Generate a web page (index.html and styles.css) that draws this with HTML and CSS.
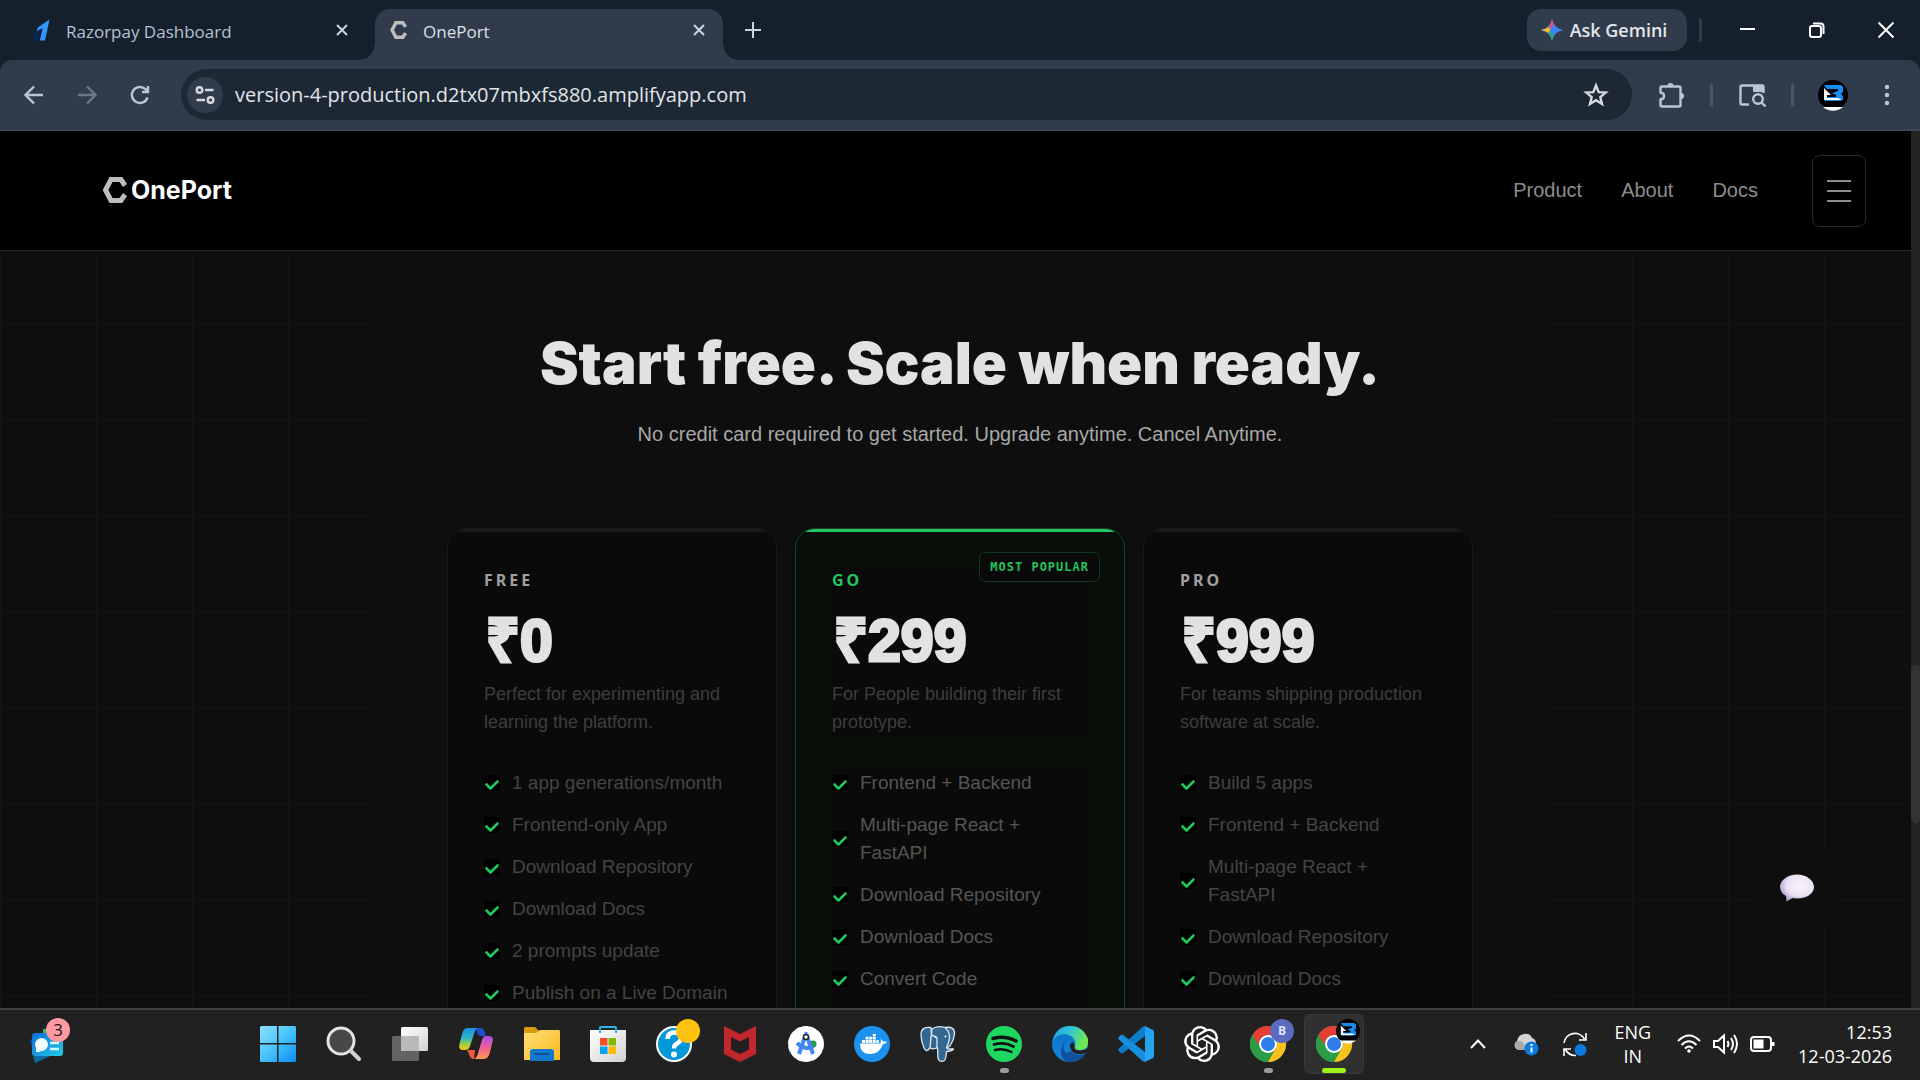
FILE: index.html
```html
<!DOCTYPE html>
<html lang="en">
<head>
<meta charset="utf-8">
<meta name="viewport" content="width=device-width, initial-scale=1">
<title>OnePort</title>
<link rel="stylesheet" href="styles.css">
</head>
<body>
<svg class="defs" aria-hidden="true">
  <defs>
    <linearGradient id="gWin" x1="0" y1="0" x2="1" y2="1"><stop offset="0" stop-color="#8fe0ff"/><stop offset=".5" stop-color="#46c3fb"/><stop offset="1" stop-color="#0a8bf5"/></linearGradient>
    <linearGradient id="gGrey" x1="0" y1="0" x2="1" y2="1"><stop offset="0" stop-color="#ffffff"/><stop offset="1" stop-color="#d2d2d2"/></linearGradient>
    <linearGradient id="gFolder" x1="0" y1="0" x2="1" y2="1"><stop offset="0" stop-color="#ffdf7d"/><stop offset="1" stop-color="#fbb915"/></linearGradient>
    <linearGradient id="gCopA" x1="0" y1="0" x2="0" y2="1"><stop offset="0" stop-color="#1b8fe8"/><stop offset=".45" stop-color="#2bb5c8"/><stop offset=".75" stop-color="#a5cf3c"/><stop offset="1" stop-color="#f6c51c"/></linearGradient>
    <linearGradient id="gCopB" x1="0" y1="0" x2="0" y2="1"><stop offset="0" stop-color="#a64de8"/><stop offset=".5" stop-color="#ee5f96"/><stop offset="1" stop-color="#ff9a4d"/></linearGradient>
    <linearGradient id="gCard" x1="0" y1="0" x2="1" y2="1"><stop offset="0" stop-color="#0a6fdc"/><stop offset="1" stop-color="#25cbe8"/></linearGradient>
    <linearGradient id="gEdgeTop" x1="0" y1="0" x2="1" y2=".4"><stop offset="0" stop-color="#1a9fe0"/><stop offset=".5" stop-color="#33c6d4"/><stop offset="1" stop-color="#6fe84e"/></linearGradient>
    <linearGradient id="gEdgeLow" x1="0" y1="0" x2="0" y2="1"><stop offset="0" stop-color="#0f6fc4"/><stop offset="1" stop-color="#1286e0"/></linearGradient>
    <radialGradient id="gBubble" cx=".58" cy=".4" r=".65"><stop offset="0" stop-color="#f8f3fb"/><stop offset=".6" stop-color="#ece2f3"/><stop offset="1" stop-color="#a893cf"/></radialGradient>
    <g id="chrome">
      <circle cx="18" cy="18" r="18" fill="#2c9c46"/>
      <path d="M2.4 9A18 18 0 0 1 33.600 9H18A9 9 0 0 0 10.200 13.500L8 18.500z" fill="#e63e32"/>
      <path d="M33.600 9A18 18 0 0 1 18 36L25.800 22.500A9 9 0 0 0 26 14L18 9z" fill="#fcc01b"/>
      <path d="M2.400 9L10.200 22.500A9 9 0 0 0 20 26.800L18 36A18 18 0 0 1 2.400 9z" fill="#2c9c46"/>
      <circle cx="18" cy="18" r="9" fill="#fff"/><circle cx="18" cy="18" r="7" fill="#2f7de9"/>
    </g>
    <g id="profile">
      <circle cx="15" cy="15" r="15" fill="#000"/>
      <path d="M6 5h17l2 2v5l-2 2 2 2v4l-5 1H7v-4h11v-2l-4-2 6-2V9H9z" fill="#168bf5"/>
      <path d="M6 8l7 7h-4v3h11l4 2H6z" fill="#fff"/>
      <path d="M5 27h20a15 15 0 0 1-20 0z" fill="#fff"/>
    </g>
    <g id="hexC">
      <path d="M22 8.500L18 2.500H8L2.500 13L8 23.500H18L22 17.500" fill="none" stroke="#bdbdbd" stroke-width="5"/>
    </g>
    <g id="check"><path d="M2.500 9.500L6.500 13.500L13.500 6.500" fill="none" stroke="#22c55e" stroke-width="2.600" stroke-linecap="round" stroke-linejoin="round"/></g>
  </defs>
</svg>

<div class="tabstrip">
  <div class="tab">
    <svg class="favicon" viewBox="0 0 24 24"><path d="M6 9L22 -2l-6 28h-7L13 9.500 5 14z" fill="#3395ff"/><path d="M3 15l8-5-4 16H-2z" fill="#072654"/></svg>
    <span class="tab-title">Razorpay Dashboard</span>
    <button class="tab-close" aria-label="Close tab"><svg width="12" height="12" viewBox="0 0 12 12"><path d="M1 1l10 10M11 1L1 11"/></svg></button>
  </div>
  <div class="tab tab-active">
    <svg class="favicon fav-hex" viewBox="0 0 25 26"><use href="#hexC"/></svg>
    <span class="tab-title">OnePort</span>
    <button class="tab-close" aria-label="Close tab"><svg width="12" height="12" viewBox="0 0 12 12"><path d="M1 1l10 10M11 1L1 11"/></svg></button>
  </div>
  <button class="new-tab" aria-label="New tab"><svg width="16" height="16" viewBox="0 0 16 16"><path d="M8 0v16M0 8h16"/></svg></button>
  <button class="gemini">
    <svg width="22" height="22" viewBox="0 0 22 22"><path d="M11 0Q13 9 22 11Q13 13 11 22Q9 13 0 11Q9 9 11 0z" fill="#3d85f5"/><path d="M11 0Q12 5 14 8L8.500 13L7 8.800Q10 6 11 0z" fill="#e8505b"/><path d="M0 11Q5 10 7.500 8L10 11.500L7.500 14Q5 12 0 11z" fill="#f4bd2c"/><path d="M11 22Q10 16 7 13.200L9.500 11.500L13 14.500Q12 17 11 22z" fill="#2fae5d"/><path d="M22 11Q14 9.500 12.500 6Q9 9 9 11.500Q10 14 12.500 15.500Q15 12.500 22 11z" fill="#3d85f5"/></svg>
    <span>Ask Gemini</span>
  </button>
  <span class="divider"></span>
  <div class="window-controls">
    <button aria-label="Minimize"><svg width="16" height="16" viewBox="0 0 16 16"><path d="M0 7h15"/></svg></button>
    <button aria-label="Restore"><svg width="16" height="16" viewBox="0 0 16 16"><rect x="1" y="4" width="11" height="11" rx="2"/><path d="M4 1.500h7.500a3 3 0 0 1 3 3V12"/></svg></button>
    <button aria-label="Close"><svg width="16" height="16" viewBox="0 0 16 16"><path d="M.5.5l15 15M15.500.5l-15 15"/></svg></button>
  </div>
</div>

<div class="toolbar">
  <div class="nav-buttons">
    <button aria-label="Back"><svg width="20" height="20" viewBox="0 0 20 20"><path d="M19 10H2M10 1.500L1.500 10l8.500 8.500"/></svg></button>
    <button class="dim" aria-label="Forward"><svg width="20" height="20" viewBox="0 0 20 20"><path d="M1 10h17M10 1.500l8.500 8.500-8.500 8.500"/></svg></button>
    <button aria-label="Reload"><svg width="20" height="20" viewBox="0 0 20 20"><path d="M17.500 12.500A8 8 0 1 1 15.500 4.200L18 6.500M18 1v6h-6"/></svg></button>
  </div>
  <div class="omnibox">
    <button class="site-info" aria-label="Site information"><svg width="20" height="20" viewBox="0 0 20 20"><circle cx="4.500" cy="5" r="2.800"/><path d="M10 5h8.500M1.500 15H10"/><circle cx="15.500" cy="15" r="2.800"/></svg></button>
    <input class="url" type="text" aria-label="Address" value="version-4-production.d2tx07mbxfs880.amplifyapp.com">
    <button class="star" aria-label="Bookmark"><svg width="24" height="24" viewBox="0 0 24 24"><path d="M12 2.500l2.700 6.600 7 .5-5.400 4.500 1.700 6.900-6-3.800-6 3.800 1.700-6.900L2.300 9.600l7-.5z"/></svg></button>
  </div>
  <button class="tool" aria-label="Extensions"><svg width="26" height="26" viewBox="0 0 26 26"><path d="M4 4.500h17a1.500 1.500 0 0 1 1.500 1.500v17a1.500 1.500 0 0 1-1.500 1.500H4A1.500 1.500 0 0 1 2.500 23v-5.500q3.500-.5 3.500-3.500t-3.500-3.500V6A1.500 1.500 0 0 1 4 4.500z"/><path class="solid" d="M9.500 4a3 3 0 0 1 6 0zM23 11a3 3 0 0 1 0 6z"/></svg></button>
  <span class="divider"></span>
  <button class="tool" aria-label="Search side panel"><svg width="28" height="26" viewBox="0 0 28 26"><path d="M11 22.500H4A1.500 1.500 0 0 1 2.500 21V5A1.500 1.500 0 0 1 4 3.500h20A1.500 1.500 0 0 1 25.500 5v6"/><path class="solid" d="M15 3h11v7H15z"/><circle cx="20" cy="17" r="4.800"/><path d="M23.500 20.500l4 4"/></svg></button>
  <span class="divider"></span>
  <div class="tool-group">
    <button class="tool" aria-label="Profile"><svg class="avatar" width="30" height="30" viewBox="0 0 30 30"><use href="#profile"/></svg></button>
    <button class="tool" aria-label="Menu"><svg width="6" height="22" viewBox="0 0 6 22"><g class="solid"><circle cx="3" cy="3" r="2.200"/><circle cx="3" cy="11" r="2.200"/><circle cx="3" cy="19" r="2.200"/></g></svg></button>
  </div>
</div>

<div class="viewport">
  <div class="site">
    <header class="site-header">
      <a class="brand" href="#"><svg width="24" height="26" viewBox="0 0 24 26"><use href="#hexC"/></svg><span>OnePort</span></a>
      <nav class="site-nav">
        <a href="#">Product</a>
        <a href="#">About</a>
        <a href="#">Docs</a>
        <button class="burger" aria-label="Open menu"><span></span><span></span><span></span></button>
      </nav>
    </header>
    <main class="pricing">
      <div class="pricing-inner">
        <h1>Start free. Scale when ready.</h1>
        <p class="lead">No credit card required to get started. Upgrade anytime. Cancel Anytime.</p>
        <div class="plans">
          <section class="plan">
            <div class="plan-head">
              <h2>FREE</h2>
              <p class="price">₹0</p>
              <p class="desc">Perfect for experimenting and learning the platform.</p>
            </div>
            <ul>
              <li><svg viewBox="0 0 16 16"><use href="#check"/></svg><span>1 app generations/month</span></li>
              <li><svg viewBox="0 0 16 16"><use href="#check"/></svg><span>Frontend-only App</span></li>
              <li><svg viewBox="0 0 16 16"><use href="#check"/></svg><span>Download Repository</span></li>
              <li><svg viewBox="0 0 16 16"><use href="#check"/></svg><span>Download Docs</span></li>
              <li><svg viewBox="0 0 16 16"><use href="#check"/></svg><span>2 prompts update</span></li>
              <li><svg viewBox="0 0 16 16"><use href="#check"/></svg><span>Publish on a Live Domain</span></li>
            </ul>
          </section>
          <section class="plan plan-go">
            <span class="badge">MOST POPULAR</span>
            <div class="plan-head">
              <h2>GO</h2>
              <p class="price">₹299</p>
              <p class="desc">For People building their first prototype.</p>
            </div>
            <ul>
              <li><svg viewBox="0 0 16 16"><use href="#check"/></svg><span>Frontend + Backend</span></li>
              <li><svg viewBox="0 0 16 16"><use href="#check"/></svg><span>Multi-page React + FastAPI</span></li>
              <li><svg viewBox="0 0 16 16"><use href="#check"/></svg><span>Download Repository</span></li>
              <li><svg viewBox="0 0 16 16"><use href="#check"/></svg><span>Download Docs</span></li>
              <li><svg viewBox="0 0 16 16"><use href="#check"/></svg><span>Convert Code</span></li>
            </ul>
          </section>
          <section class="plan">
            <div class="plan-head">
              <h2>PRO</h2>
              <p class="price">₹999</p>
              <p class="desc">For teams shipping production software at scale.</p>
            </div>
            <ul>
              <li><svg viewBox="0 0 16 16"><use href="#check"/></svg><span>Build 5 apps</span></li>
              <li><svg viewBox="0 0 16 16"><use href="#check"/></svg><span>Frontend + Backend</span></li>
              <li><svg viewBox="0 0 16 16"><use href="#check"/></svg><span>Multi-page React + FastAPI</span></li>
              <li><svg viewBox="0 0 16 16"><use href="#check"/></svg><span>Download Repository</span></li>
              <li><svg viewBox="0 0 16 16"><use href="#check"/></svg><span>Download Docs</span></li>
            </ul>
          </section>
        </div>
      </div>
    </main>
  </div>
  <div class="scrollbar"><span class="thumb"></span></div>
  <button class="chat" aria-label="Chat"><svg width="36" height="28" viewBox="0 0 36 28"><path d="M18 .5C27 .5 35 6 35 13s-8 11.500-17 11.500c-1.500 0-3-.2-4.300-.4L7.500 27.500 7 22C3 20 1 16.500 1 13 1 6 9 .5 18 .5z" fill="url(#gBubble)"/></svg></button>
</div>

<footer class="taskbar">
  <button class="widgets" aria-label="Widgets">
    <svg width="42" height="56" viewBox="0 0 42 56"><path d="M14 13h10v10H14z" fill="#35b56a"/><path d="M1 24l4-2 2 12-4-2z" fill="#0b4c94"/><path d="M4 40l24-3-22 10z" fill="#0c6aa0"/><rect x="3" y="17" width="31" height="23" rx="3" fill="url(#gCard)"/><ellipse cx="12.500" cy="28.500" rx="6.500" ry="6.500" fill="#f4fdff"/><path d="M7 31v5h5z" fill="#f4fdff"/><path d="M21 27h9M21 33h9" stroke="#d8fbff" stroke-width="2.400"/><circle cx="29" cy="14" r="12" fill="#ff9aa2"/><text x="29" y="20" text-anchor="middle" class="badge-num">3</text></svg>
  </button>
  <div class="apps">
    <button aria-label="Start"><svg viewBox="0 0 36 36"><path d="M1.500 0H17v17H0V1.500A1.500 1.500 0 0 1 1.500 0zM18.500 0h16A1.500 1.500 0 0 1 36 1.500V17H18.500zM0 18.500h17V36H1.500A1.500 1.500 0 0 1 0 34.500zM18.500 18.500H36v16a1.500 1.500 0 0 1-1.500 1.500h-16z" fill="url(#gWin)"/></svg></button>
    <button aria-label="Search"><svg viewBox="0 0 36 36"><circle cx="15" cy="15" r="13" fill="#484848" stroke="#e4e4e6" stroke-width="3"/><path d="M25 25l8 8" stroke="#d2d2d6" stroke-width="4" stroke-linecap="round"/></svg></button>
    <button aria-label="Task view"><svg viewBox="0 0 36 36"><rect x="9" y="1" width="27" height="24" rx="1.500" fill="url(#gGrey)"/><rect x="0" y="10" width="27" height="25" rx="1.500" fill="#6f6f6f" opacity=".85"/><path d="M9 10h18v15H9z" fill="#b9b9b9"/></svg></button>
    <button aria-label="Copilot"><svg viewBox="0 0 36 36"><path d="M18 2h4q4 0 5 5l1 3h-5q-3 0-4-4z" fill="#1d4fd0"/><path d="M9 2h11q-3 1-4 6l-4 12q-1 4-5 4H5q-5 0-3.500-6L4 8q1.500-6 5-6z" fill="url(#gCopA)"/><path d="M28 10h3q5 0 3.500 6L32 26q-1.500 7-6 7H16q3-1 4-6l4-13q1-4 4-4z" fill="url(#gCopB)"/><path d="M9 24h8l-1 9q-4 0-5-5z" fill="#ee5a3a"/></svg></button>
    <button aria-label="File Explorer"><svg viewBox="0 0 36 36"><path d="M0 2.500A1.500 1.500 0 0 1 1.500 1H11l4 4v4H0z" fill="#dd9a0c"/><path d="M0 7h12l4-3h19q1 0 1 1.500V34H0z" fill="url(#gFolder)"/><path d="M6 35V26q0-3 3-3h18q3 0 3 3v9z" fill="#1177cf"/><path d="M11 28h14" stroke="#0a4f98" stroke-width="2" stroke-linecap="round"/></svg></button>
    <button aria-label="Store"><svg viewBox="0 0 36 36"><path d="M10 8V2q0-1 1-1h14q1 0 1 1v6" fill="none" stroke="#2bb3ef" stroke-width="2"/><path d="M0 4h36v28q0 4-4 4H4q-4 0-4-4z" fill="url(#gGrey)"/><path d="M10 7V3M26 7V3" stroke="#2bb3ef" stroke-width="2"/><path d="M10 12h7.500v7.500H10z" fill="#f25022"/><path d="M18.500 12H26v7.500h-7.500z" fill="#7fba00"/><path d="M10 20.500h7.500V28H10z" fill="#00a4ef"/><path d="M18.500 20.500H26V28h-7.500z" fill="#ffb900"/></svg></button>
    <button aria-label="Help"><svg viewBox="0 0 36 36"><circle cx="18" cy="18" r="17" fill="#0098d8" stroke="#fff" stroke-width="2"/><path d="M11.500 13q0-6.500 7-6.500 6.500 0 6.500 5.500 0 3.500-4 5.500-3 1.500-3 5" fill="none" stroke="#fff" stroke-width="4.500"/><circle cx="18" cy="28.500" r="3" fill="#fff"/><circle cx="32" cy="5" r="12" fill="#ffc20e"/></svg></button>
    <button aria-label="McAfee"><svg viewBox="0 0 36 36"><path d="M2 0l16 8 16-8v28L18 36 2 28zM9 11v12.500L18 28l9-4.500V11l-9 4.500z" fill="#c1272d" fill-rule="evenodd"/></svg></button>
    <button aria-label="Android Studio"><svg viewBox="0 0 36 36"><circle cx="18" cy="18" r="16.500" fill="#fff" stroke="#fff" stroke-width="3" stroke-dasharray="5 2.400" stroke-linecap="round"/><circle cx="25" cy="18" r="3.500" fill="#1e9a48"/><path d="M17.500 9L11 28M18.500 9L25 28" stroke="#4285f4" stroke-width="4"/><path d="M18 6v5" stroke="#4285f4" stroke-width="3"/><path d="M9 17q9 8 16 3" fill="none" stroke="#4285f4" stroke-width="4"/><circle cx="18" cy="11" r="2.500" fill="#fff" stroke="#222" stroke-width="1.500"/></svg></button>
    <button aria-label="Docker"><svg viewBox="0 0 36 36"><circle cx="18" cy="18" r="18" fill="#1d91ee"/><path d="M6 17.500h20q1.500-1 .5-4.500 2 1 2.500 2.500 2-.5 4 .5-1 2-4 2Q26 28 15 28 6 28 6 17.500z" fill="#fff"/><path d="M8 14h3v3H8zM11.600 14h3v3h-3zM15.200 14h3v3h-3zM18.800 14h3v3h-3zM22.400 14h2.500v3h-2.500zM11.600 10.800h3v2.600h-3zM15.200 10.800h3v2.600h-3zM18.800 10.800h3v2.600h-3zM18.800 8h3v2.200h-3z" fill="#fff"/></svg></button>
    <button aria-label="PostgreSQL"><svg viewBox="0 0 36 36"><g fill="#336791" stroke="#dfe8ef" stroke-width="1.300" stroke-linejoin="round"><path d="M11 1.500Q1 0 1 9q0 6 3 13 2.500 4.500 5 1l3-4z"/><path d="M25 1.500Q35 0 34.500 8q-.5 6-4.500 12l-3 2-3-4z"/><path d="M12 3q5-4 13-1.500Q31 7 29 14q-1 5-2.500 7.500 0 1.500 2 1.500h5q-2 2.500-7 2.500-.5 9-3 9.500-4.500 1.500-5.500-3l-.5-10Q11 23 11 15z"/><path d="M10 22q5 2 7-1V12q-4-4-6-1z"/></g><circle cx="15.500" cy="11" r="1" fill="#fff"/><circle cx="25.500" cy="10.500" r="1" fill="#fff"/></svg></button>
    <button class="running" aria-label="Spotify"><svg viewBox="0 0 36 36"><circle cx="18" cy="18" r="18" fill="#1ed760"/><g fill="none" stroke="#121212" stroke-linecap="round"><path d="M7 12.500Q19 9 30 15" stroke-width="3.400"/><path d="M8 18.500Q18.500 15.500 27.500 20.500" stroke-width="2.800"/><path d="M9 24Q17.500 21.800 25.500 26" stroke-width="2.400"/></g></svg></button>
    <button aria-label="Edge"><svg viewBox="0 0 36 36"><circle cx="18" cy="18" r="18" fill="url(#gEdgeLow)"/><path d="M1 15Q4 0 18 0q13 0 18 13v4q0 7-8 7-6 0-5-3 2-7-4-11Q8 4 1 15z" fill="url(#gEdgeTop)"/><path d="M14 14q-6 8 2 15 7 6 17 0Q26 37 17 36 8 34 9 24q1-7 5-10z" fill="#11509c"/><path d="M22.500 21q0 3.500 6 3.500 4.500 0 7.500-3v6h-4q-10 2-13-3.500-3-6 2-8 2 2 1.500 5z" fill="#222"/><path d="M19 25q4 6 14 2.500l-2.500 4Q20 36 14 27z" fill="#11509c"/></svg></button>
    <button aria-label="VS Code"><svg viewBox="0 0 36 36"><path d="M27 0l8 4q1 .5 1 2v24q0 1.500-1 2l-8 4z" fill="#24a4ef"/><path d="M27 0v10L5 27q-1 .8-2 0L.8 25q-1.200-1.200 0-2.400L25 .5z" fill="#0b7cc8"/><path d="M27 36V26L5 9Q4 8.200 3 9L.8 11q-1.200 1.200 0 2.400L25 35.500z" fill="#1690dc"/></svg></button>
    <button aria-label="ChatGPT"><svg viewBox="0 0 24 24"><path fill="#fff" d="M22.282 9.821a5.985 5.985 0 0 0-.516-4.910 6.046 6.046 0 0 0-6.510-2.900A6.065 6.065 0 0 0 4.981 4.182a5.985 5.985 0 0 0-3.998 2.900 6.046 6.046 0 0 0 .743 7.097 5.980 5.980 0 0 0 .511 4.911 6.051 6.051 0 0 0 6.515 2.900A5.985 5.985 0 0 0 13.260 24a6.056 6.056 0 0 0 5.772-4.206 5.990 5.990 0 0 0 3.998-2.900 6.056 6.056 0 0 0-.748-7.073zm-9.022 12.608a4.476 4.476 0 0 1-2.876-1.041l.142-.080 4.778-2.758a.795.795 0 0 0 .393-.681v-6.737l2.020 1.169a.071.071 0 0 1 .038.052v5.583a4.504 4.504 0 0 1-4.495 4.494zm-9.661-4.125a4.471 4.471 0 0 1-.535-3.014l.142.085 4.783 2.758a.771.771 0 0 0 .781 0l5.843-3.369v2.332a.080.080 0 0 1-.033.062L9.740 19.950a4.499 4.499 0 0 1-6.141-1.646zM2.341 7.896a4.485 4.485 0 0 1 2.366-1.973V11.600a.766.766 0 0 0 .388.677l5.814 3.354-2.020 1.169a.076.076 0 0 1-.071 0l-4.830-2.787A4.504 4.504 0 0 1 2.341 7.872zm16.596 3.856L13.104 8.364 15.119 7.200a.076.076 0 0 1 .071 0l4.830 2.791a4.494 4.494 0 0 1-.677 8.104v-5.677a.790.790 0 0 0-.407-.667zm2.011-3.023l-.142-.085-4.774-2.782a.776.776 0 0 0-.785 0L9.409 9.230V6.897a.066.066 0 0 1 .028-.062l4.830-2.787a4.499 4.499 0 0 1 6.680 4.660zM8.307 12.863l-2.020-1.164a.080.080 0 0 1-.038-.057V6.074a4.499 4.499 0 0 1 7.376-3.454l-.142.081L8.704 5.459a.795.795 0 0 0-.393.681zm1.098-2.365l2.602-1.500 2.607 1.500v2.999l-2.597 1.500-2.607-1.500Z"/></svg></button>
    <button class="running" aria-label="Chrome, profile B"><svg viewBox="0 0 36 36"><use href="#chrome"/><circle cx="32" cy="5" r="12" fill="#5c6bc0"/><text x="32" y="9" text-anchor="middle" class="profile-letter">B</text></svg></button>
    <button class="running current" aria-label="Chrome"><svg viewBox="0 0 36 36"><use href="#chrome"/><use href="#profile" transform="translate(20 -7) scale(.8)"/></svg></button>
  </div>
  <div class="tray">
    <button class="chev" aria-label="Show hidden icons"><svg width="16" height="10" viewBox="0 0 16 10"><path d="M1 9l7-7.500L15 9"/></svg></button>
    <button class="cloud" aria-label="OneDrive"><svg width="26" height="24" viewBox="0 0 26 24"><path d="M5 18a5 5 0 0 1-1-9Q5 3 11 2q6-1 8 4 4 1 4 6t-6 6z" fill="#d4d4d4"/><path d="M5 18a5 5 0 0 1-1-9q5-1 7 3l4 6z" fill="#a9a9a9"/><circle cx="18.500" cy="16.500" r="7" fill="#0a7bdc"/><path d="M18.500 15.500v5M18.500 12v2" stroke="#fff" stroke-width="2"/></svg></button>
    <button class="sync" aria-label="Updates"><svg width="26" height="26" viewBox="0 0 26 26"><path d="M2 12A11 11 0 0 1 22.500 8M24 2v7h-7M14 24.500Q7 25 3 18M2 25v-7h7"/><circle cx="18.500" cy="19" r="6" fill="#0a7bdc" stroke="none"/></svg></button>
    <button class="lang">ENG<br>IN</button>
    <button class="status" aria-label="Network, volume and battery">
      <svg width="24" height="20" viewBox="0 0 24 20"><path d="M1 7Q12-4 23 7M4.500 11Q12 3.500 19.500 11M8 14.500q4-4 8 0"/><circle cx="12" cy="17" r="1.800" fill="#fff" stroke="none"/></svg>
      <svg width="25" height="22" viewBox="0 0 25 22"><path d="M1 8h4l6-5.500v17L5 14H1zM14.500 8q2 3 0 6M18 5q4 6 0 12M21 2q6 9 0 18"/></svg>
      <svg width="25" height="16" viewBox="0 0 25 16"><rect x="1" y="1" width="20" height="14" rx="3"/><path d="M3.500 3.500h10v9h-10z" fill="#fff" stroke="none"/><path d="M23 6v4" stroke-width="3"/></svg>
    </button>
    <button class="clock">12:53<br>12-03-2026</button>
  </div>
</footer>
</body>
</html>
```
FILE: styles.css
```css
*, *::before, *::after { box-sizing: border-box; }

body {
  margin: 0;
  height: 100vh;
  display: flex;
  flex-direction: column;
  overflow: hidden;
  background: #14212d;
  font-family: "Liberation Sans", Arial, sans-serif;
  color: #e2e2e2;
}

h1, h2, p, ul { margin: 0; padding: 0; }
svg { display: block; overflow: visible; }
a { color: inherit; text-decoration: none; }

button {
  display: flex;
  align-items: center;
  justify-content: center;
  margin: 0;
  padding: 0;
  border: 0;
  background: none;
  color: inherit;
  font: inherit;
}

.defs { position: absolute; width: 0; height: 0; }

/* Browser tab strip */
.tabstrip {
  flex: none;
  display: flex;
  align-items: center;
  height: 60px;
  padding-left: 18px;
  font-family: "Open Sans", "Noto Sans", sans-serif;
  font-size: 18px;
}
.tab {
  display: flex;
  align-items: center;
  gap: 15px;
  width: 348px;
  height: 51px;
  margin: 9px 9px 0 0;
  padding: 0 18px 9px 15px;
  color: #b7c2d0;
  font-size: 17px;
}
.tab-active {
  position: relative;
  margin-right: 0;
  border-radius: 15px 15px 0 0;
  background: #303b4b;
  color: #dde1e7;
}
.tab-active::before, .tab-active::after {
  content: "";
  position: absolute;
  bottom: 0;
  width: 15px;
  height: 15px;
}
.tab-active::before { right: 100%; background: radial-gradient(circle at 0 0, transparent 14px, #303b4b 15px); }
.tab-active::after { left: 100%; background: radial-gradient(circle at 100% 0, transparent 14px, #303b4b 15px); }
.favicon { width: 18px; height: 24px; }
.fav-hex { height: 18px; }
.tab-title { flex: 1; padding-top: 2px; }
.tab-close svg, .new-tab svg { fill: none; stroke: #ccd4df; stroke-width: 2; }
.tab-close { height: 24px; }
.new-tab { width: 60px; height: 42px; }
.gemini {
  gap: 7px;
  width: 160px;
  height: 42px;
  margin-left: auto;
  margin-right: 12px;
  padding-right: 6px;
  border-radius: 14px;
  background: #303b4b;
  color: #e3e6ea;
  font-weight: 600;
}
.divider { flex: none; width: 3px; height: 24px; border-radius: 2px; background: #46556a; }
.tabstrip .divider { background: #303b4b; }
.window-controls { display: flex; margin-left: 11px; }
.window-controls button { width: 69px; height: 60px; }
.window-controls svg { fill: none; stroke: #fff; stroke-width: 2; }

/* Browser toolbar */
.toolbar {
  flex: none;
  display: flex;
  align-items: center;
  gap: 15px;
  height: 71px;
  padding: 0 9px 0 7px;
  border-bottom: 2px solid #3c4654;
  border-radius: 12px 12px 0 0;
  background: #303b4b;
}
.toolbar svg { fill: none; stroke: #b8c6dc; stroke-width: 2.4; }
.toolbar .solid { fill: #b8c6dc; stroke: none; }
.nav-buttons { display: flex; }
.nav-buttons button { width: 53px; height: 50px; }
.toolbar .dim svg { stroke: #6d7787; }
.toolbar .avatar { stroke: none; }
.omnibox {
  flex: 1;
  display: flex;
  align-items: center;
  gap: 12px;
  height: 51px;
  padding: 0 24px 0 6px;
  border-radius: 26px;
  background: #1c2833;
}
.site-info { width: 36px; height: 36px; border-radius: 50%; background: #303b4b; }
.omnibox .site-info svg, .omnibox .star svg { stroke: #d5d9de; }
.url {
  flex: 1;
  padding: 0;
  border: 0;
  background: none;
  color: #e1e5e9;
  font-family: "Open Sans", "Noto Sans", sans-serif;
  font-size: 20px;
}
.tool { width: 48px; height: 48px; }
.tool-group { display: flex; gap: 6px; }

/* Page area */
.viewport { position: relative; flex: 1; min-height: 0; overflow: hidden; background: #0e0e0e; }
.site { height: 100%; overflow: hidden; }
.site-header {
  display: flex;
  align-items: center;
  justify-content: space-between;
  height: 120px;
  padding: 0 54px 0 103px;
  border-bottom: 1px solid #2a2a2a;
  background: #000;
}
.brand {
  display: flex;
  align-items: center;
  gap: 4px;
  padding-bottom: 2px;
  font: 700 25px/30px Inter, sans-serif;
  color: #fff;
}
.site-nav { display: flex; align-items: center; gap: 39px; font-size: 20px; color: #8c8c8c; }
.burger {
  flex-direction: column;
  gap: 8px;
  width: 54px;
  height: 72px;
  margin-left: 15px;
  border: 1px solid #2a2a2a;
  border-radius: 8px;
}
.burger span { width: 24px; height: 2px; background: #8c8c8c; }

.pricing {
  min-height: 100%;
  padding: 0 375px;
  background-color: #0e0e0e;
  background-image:
    linear-gradient(to right, #151515 1px, transparent 1px),
    linear-gradient(to bottom, #151515 1px, transparent 1px);
  background-size: 96px 96px;
  background-position: 0 72px;
}
.pricing-inner {
  display: flex;
  flex-direction: column;
  align-items: center;
  padding: 78px 0;
  background: #0e0e0e;
}
h1 {
  font-family: Inter, "Liberation Sans", sans-serif;
  font-size: 58px;
  font-weight: 900;
  line-height: 68px;
}
.lead { margin-top: 23px; font-size: 20px; line-height: 28px; color: #a8a8a8; }
.plans {
  display: grid;
  grid-template-columns: repeat(3, 330px);
  gap: 18px;
  margin-top: 80px;
}
.plan {
  position: relative;
  height: 720px;
  padding: 39px 36px 0;
  border: 1px solid #1a1a1a;
  border-radius: 20px;
  overflow: hidden;
  background: #0a0a0a;
}
.plan::before {
  content: "";
  position: absolute;
  top: 0;
  left: 0;
  right: 0;
  height: 3px;
  background: #1a1a1a;
}
.plan-go { border-color: #1b4023; background: #080f08; }
.plan-go::before { background: #22c55e; }
.plan-head { margin-bottom: 33px; background: #0a0a0a; }
h2 {
  font: 700 16px/24px "Noto Sans", sans-serif;
  letter-spacing: 3px;
  color: #a0a0a0;
}
.plan-go h2 { color: #22c55e; }
.price {
  margin: 20px 0 10px;
  padding-left: 2px;
  font-size: 59px;
  font-weight: 700;
  line-height: 58px;
  -webkit-text-stroke: 3px #e2e2e2;
}
.desc { font-size: 18px; line-height: 28px; color: #3e3e3e; }
.plan ul { display: flex; flex-direction: column; gap: 14px; padding-bottom: 60px; list-style: none; background: #0a0a0a; }
.plan li { display: flex; align-items: center; gap: 12px; font-size: 19px; line-height: 28px; color: #444; }
.plan li svg { flex: none; width: 16px; height: 16px; background: #000; }
.plan-go li { color: #555; }
.badge {
  position: absolute;
  top: 23px;
  right: 24px;
  padding: 0 10px;
  border: 1px solid #103a1f;
  border-radius: 6px;
  background: #0a0a0a;
  color: #22c55e;
  font: 700 12px/28px "DejaVu Sans Mono", monospace;
  letter-spacing: 1px;
}

.scrollbar { position: absolute; top: 0; right: 0; bottom: 0; width: 9px; padding-top: 534px; background: #242424; }
.thumb { display: block; height: 158px; border-radius: 5px; background: #333; }
.chat { position: absolute; right: 80px; bottom: 84px; width: 86px; height: 72px; background: #0e0e0e; }

/* Taskbar */
.taskbar {
  flex: none;
  display: flex;
  align-items: center;
  height: 72px;
  padding: 0 28px 2px 29px;
  border-top: 2px solid #404040;
  background: #212121;
  font: 18px/24px "Open Sans", "Noto Sans", sans-serif;
  color: #fff;
}
.badge-num { font: 17px "Open Sans", sans-serif; fill: #241214; }
.profile-letter { font: 700 12px "Open Sans", sans-serif; fill: #dfe3ff; }
.apps { display: flex; gap: 6px; margin-left: 177px; }
.apps button { position: relative; width: 60px; height: 60px; border-radius: 6px; }
.apps svg { width: 36px; height: 36px; }
.apps .current { background: #303030; border: 1px solid #3a3a3a; }
.running::after {
  content: "";
  position: absolute;
  bottom: 1px;
  width: 9px;
  height: 5px;
  border-radius: 3px;
  background: #9b9b9b;
}
.current::after { bottom: 0; width: 24px; background: #9cf21a; }
.tray { display: flex; align-items: center; margin-left: auto; }
.tray svg { fill: none; stroke: #fff; stroke-width: 2; }
.tray .cloud svg { stroke: none; }
.tray .cloud { margin-left: 27px; }
.tray .sync { margin-left: 23px; }
.tray .sync svg { stroke-width: 1.6; }
.tray .lang { margin-left: 26px; text-align: center; }
.status { gap: 12px; margin-left: 26px; }
.clock { margin-left: 23px; text-align: right; }
```
